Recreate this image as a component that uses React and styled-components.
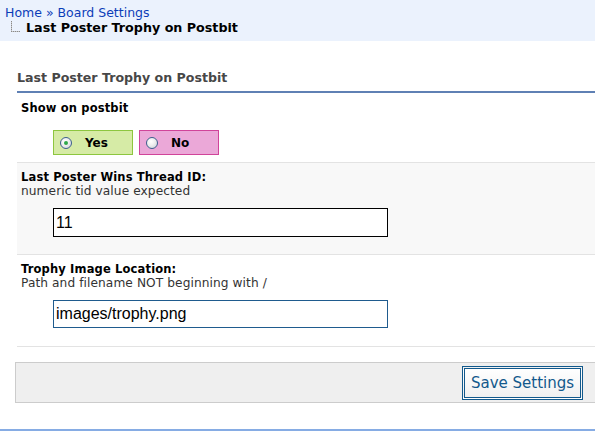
import React from "react";
import styled, { createGlobalStyle } from "styled-components";

const Global = createGlobalStyle`
  html, body { margin: 0; padding: 0; background: #fff; overflow: hidden; }
  body { font-family: "DejaVu Sans", Verdana, sans-serif; color: #000; }
  * { box-sizing: border-box; }
`;

const Page = styled.div`
  width: 595px;
  height: 431px;
  display: flex;
  flex-direction: column;
  position: relative;
`;

const Breadcrumb = styled.div`
  height: 41px;
  background: #ebf2fd;
  padding: 5px 0 0 5px;
`;

const Crumbs = styled.div`
  font-size: 12.5px;
  line-height: 15px;
  color: #0b3db8;
  a { color: #0b3db8; text-decoration: none; }
`;

const Current = styled.div`
  display: flex;
  align-items: flex-end;
  gap: 4px;
  padding-left: 5px;
  font-size: 12.7px;
  font-weight: bold;
  line-height: 16px;
`;

const Main = styled.div`
  margin: 24px 0 0 17px;
  display: flex;
  flex-direction: column;
`;

const Heading = styled.div`
  font-size: 12.6px;
  line-height: 16px;
  font-weight: bold;
  color: #474747;
  padding: 5px 0 5px;
  border-bottom: 2px solid #5f80b4;
  box-shadow: 0 1px 0 #a9bfdf;
`;

const Row = styled.div`
  padding: ${(p) => p.$pad || "8px 0 17px 4px"};
  background: ${(p) => (p.$alt ? "#f8f8f8" : "#fff")};
  border-bottom: 1px solid #e3e3e3;
`;

const Label = styled.div`
  font-size: 11.5px;
  letter-spacing: 0.15px;
  line-height: 13px;
  font-weight: bold;
  color: #000;
`;

const Desc = styled.div`
  font-size: 12.2px;
  letter-spacing: 0.08px;
  line-height: 14px;
  color: #333;
`;

const FieldWrap = styled.div`
  padding-left: 32px;
  margin-top: ${(p) => p.$mt || "10px"};
  display: flex;
  gap: 6px;
`;

const Choice = styled.label`
  width: 80px;
  height: 25px;
  display: flex;
  align-items: center;
  padding-left: 6px;
  gap: 13px;
  font-size: 12px;
  font-weight: bold;
  background: ${(p) => (p.$yes ? "#d6eba6" : "#eba8d8")};
  border: 1px solid ${(p) => (p.$yes ? "#8dc63f" : "#d0449a")};
`;

const Radio = styled.span`
  width: 12px;
  height: 12px;
  border-radius: 50%;
  border: 1px solid #3d5f8d;
  background: radial-gradient(circle at 40% 35%, #ffffff 0%, #f0f0f0 40%, #c9ced6 100%);
  display: flex;
  align-items: center;
  justify-content: center;
  &::after {
    content: "";
    width: 4px;
    height: 4px;
    border-radius: 50%;
    background: ${(p) => (p.$checked ? "#2fa84a" : "transparent")};
  }
`;

const TextInput = styled.input`
  width: 335px;
  height: ${(p) => p.$h || "29px"};
  border: 1px solid ${(p) => (p.$focus ? "#1f5b8e" : "#000")};
  padding: 0 2px;
  font-family: "Liberation Sans", Arial, sans-serif;
  font-size: 16px;
  color: #000;
  background: #fff;
  outline: none;
`;

const Footer = styled.div`
  margin: 15px 0 0 -2px;
  height: 41px;
  background: #efefef;
  border: 1px solid #cccccc;
  border-right: none;
  display: flex;
  justify-content: flex-end;
  align-items: flex-start;
  padding: 3px 12px 0 0;
`;

const SaveButton = styled.button`
  width: 121px;
  height: 34px;
  border: 3px double #12598c;
  background: linear-gradient(#ffffff, #f0f0f0);
  color: #12598c;
  font-family: "DejaVu Sans", Verdana, sans-serif;
  font-size: 15px;
  padding: 0;
`;

const BottomLine = styled.div`
  position: absolute;
  left: 0;
  right: 0;
  bottom: 0;
  height: 2px;
  background: #86ace4;
`;

const TreeIcon = () => (
  <svg width="12" height="12" viewBox="0 0 12 12" style={{ marginBottom: 3 }}>
    <g fill="#8a8a8a">
      {[0, 2, 4, 6, 8].map((y) => (
        <rect key={"v" + y} x="1" y={y} width="1" height="1" />
      ))}
      {[1, 3, 5, 7, 9].map((x) => (
        <rect key={"h" + x} x={x} y="10" width="1" height="1" />
      ))}
    </g>
    <g fill="#c8c8c8">
      {[1, 3, 5, 7, 9].map((y) => (
        <rect key={"v2" + y} x="1" y={y} width="1" height="1" />
      ))}
      {[2, 4, 6, 8].map((x) => (
        <rect key={"h2" + x} x={x} y="10" width="1" height="1" />
      ))}
    </g>
  </svg>
);

export default function App() {
  return (
    <Page>
      <Global />
      <Breadcrumb>
        <Crumbs>
          <a href="#">Home</a> » <a href="#">Board Settings</a>
        </Crumbs>
        <Current>
          <TreeIcon />
          <span>Last Poster Trophy on Postbit</span>
        </Current>
      </Breadcrumb>
      <Main>
        <Heading>Last Poster Trophy on Postbit</Heading>
        <Row $pad="9px 0 7px 4px">
          <Label>Show on postbit</Label>
          <FieldWrap $mt="15px">
            <Choice $yes>
              <Radio $checked />
              <span>Yes</span>
            </Choice>
            <Choice>
              <Radio />
              <span>No</span>
            </Choice>
          </FieldWrap>
        </Row>
        <Row $alt>
          <Label>Last Poster Wins Thread ID:</Label>
          <Desc>numeric tid value expected</Desc>
          <FieldWrap>
            <TextInput defaultValue="11" />
          </FieldWrap>
        </Row>
        <Row $pad="8px 0 18px 4px">
          <Label>Trophy Image Location:</Label>
          <Desc>Path and filename NOT beginning with /</Desc>
          <FieldWrap>
            <TextInput $focus $h="28px" defaultValue="images/trophy.png" />
          </FieldWrap>
        </Row>
        <Footer>
          <SaveButton>Save Settings</SaveButton>
        </Footer>
      </Main>
      <BottomLine />
    </Page>
  );
}
